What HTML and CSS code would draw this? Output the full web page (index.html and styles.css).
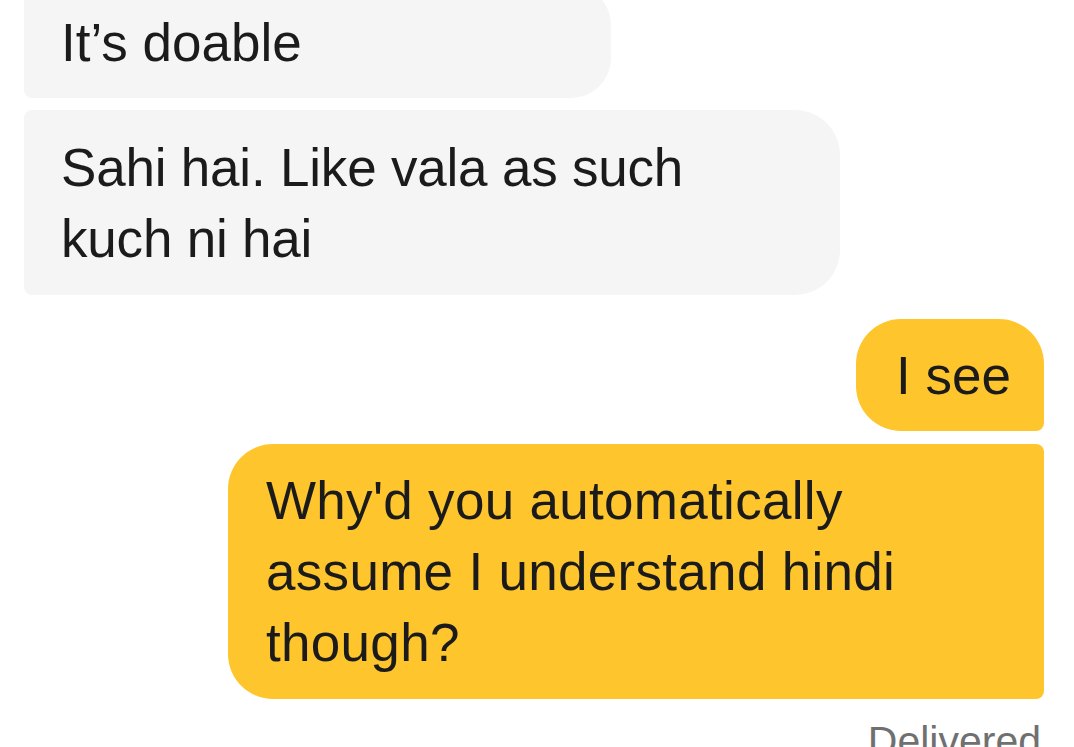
FILE: index.html
```html
<!DOCTYPE html>
<html lang="en">
<head>
<meta charset="utf-8">
<title>Chat</title>
<link rel="stylesheet" href="styles.css">
</head>
<body>
<main class="chat">
  <div class="msg msg-in msg-in-last msg-doable">It’s doable</div>
  <div class="msg msg-in msg-in-single">Sahi hai. Like vala as such kuch ni hai</div>
  <div class="msg msg-out msg-out-first">I see</div>
  <div class="msg msg-out msg-out-last">Why'd you automatically assume I understand hindi though?</div>
  <div class="status">Delivered</div>
</main>
</body>
</html>
```
FILE: styles.css
```css
html, body {
  margin: 0;
  padding: 0;
  background: #ffffff;
  overflow: hidden;
}

.chat {
  display: flex;
  flex-direction: column;
  margin-top: -15px;
  padding: 0 30px 0 24px;
  font-family: "Liberation Sans", Arial, sans-serif;
}

.msg {
  box-sizing: border-box;
  max-width: 816px;
  padding: 22px 36px 21px 37px;
  font-size: 53px;
  line-height: 71px;
  color: #1b1b1b;
}

.msg-in {
  align-self: flex-start;
  background: #f5f5f5;
}

.msg-out {
  align-self: flex-end;
  background: #fec62c;
}

.msg-doable {
  width: 587px;
  border-radius: 8px 40px 40px 8px;
  padding-bottom: 20px;
}

.msg-in-single {
  margin-top: 12px;
  border-radius: 8px 45px 45px 8px;
  letter-spacing: -0.2px;
}

.msg-out-first {
  margin-top: 24px;
  padding: 21px 33px 20px 40px;
  border-radius: 45px 45px 8px 45px;
}

.msg-out-last {
  margin-top: 13px;
  padding: 21px 36px 21px 38px;
  border-radius: 45px 8px 8px 45px;
  letter-spacing: 0.3px;
}

.status {
  align-self: flex-end;
  margin-top: 19px;
  margin-right: 3px;
  font-size: 41px;
  line-height: 46px;
  color: #707070;
}
```
